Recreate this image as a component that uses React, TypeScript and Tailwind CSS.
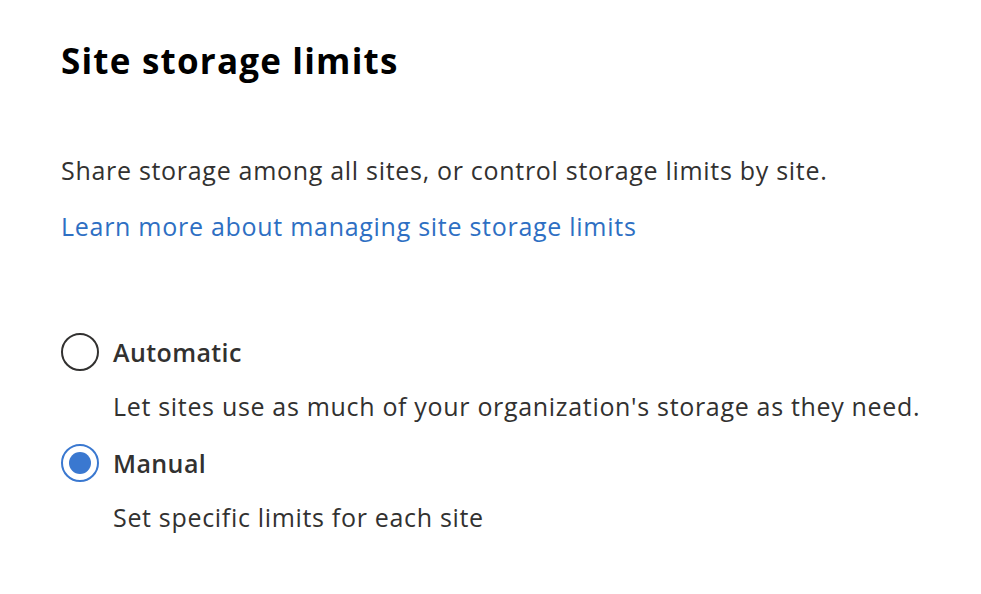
import { useState } from 'react';

type Option = { id: string; label: string; description: string };

const options: Option[] = [
  { id: 'auto', label: 'Automatic', description: "Let sites use as much of your organization's storage as they need." },
  { id: 'manual', label: 'Manual', description: 'Set specific limits for each site' },
];

const Radio = ({ checked }: { checked: boolean }) => (
  <span
    className={`flex h-[38px] w-[38px] shrink-0 items-center justify-center rounded-full border-2 ${
      checked ? 'border-[#3a78d0]' : 'border-[#323130]'
    }`}
  >
    {checked && <span className="h-[22px] w-[22px] rounded-full bg-[#3a78d0]" />}
  </span>
);

export default function App() {
  const [mode, setMode] = useState('manual');

  return (
    <div className="min-h-[594px] w-[981px] bg-white px-[61px] pt-[38px] font-['Open_Sans',sans-serif] text-[#323130]">
      <h1 className="text-[35px] font-bold leading-[46px] tracking-[1.2px] text-black">Site storage limits</h1>
      <p className="mt-[69px] whitespace-nowrap text-[25px] leading-[34px] tracking-[0.7px]">
        Share storage among all sites, or control storage limits by site.
      </p>
      <a href="#" className="mt-[22px] block whitespace-nowrap text-[25px] leading-[34px] tracking-[0.72px] text-[#2e6fc3]">
        Learn more about managing site storage limits
      </a>
      <div className="mt-[90px] flex flex-col">
        {options.map((o) => (
          <label key={o.id} className="flex cursor-pointer flex-col" onClick={() => setMode(o.id)}>
            <div className="flex items-center gap-[14px]">
              <Radio checked={mode === o.id} />
              <span className="text-[25px] font-semibold leading-[38px] tracking-[0.4px]">{o.label}</span>
            </div>
            <span className="mb-[21px] ml-[52px] mt-[18px] whitespace-nowrap text-[25px] leading-[34px] tracking-[0.68px]">
              {o.description}
            </span>
          </label>
        ))}
      </div>
    </div>
  );
}
